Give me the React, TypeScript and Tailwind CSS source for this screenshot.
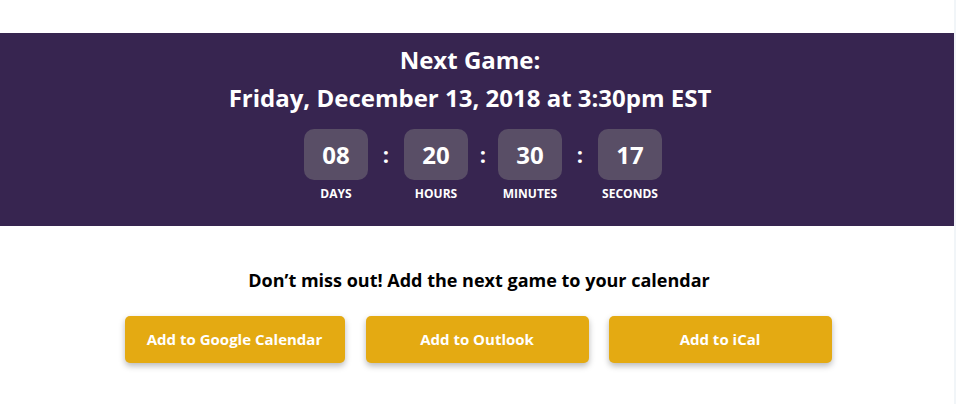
import React from "react";

const units = [
  { v: "08", l: "DAYS" },
  { v: "20", l: "HOURS" },
  { v: "30", l: "MINUTES" },
  { v: "17", l: "SECONDS" },
];

function Unit({ v, l }: { v: string; l: string }) {
  return (
    <div className="flex flex-col items-center w-[64px]">
      <div className="w-[64px] h-[51px] rounded-[10px] bg-[#594e66] flex items-center justify-center text-white text-[24px] font-bold leading-none">
        {v}
      </div>
      <div className="mt-[8px] text-white text-[12px] font-bold leading-none whitespace-nowrap">
        {l}
      </div>
    </div>
  );
}

function Colon({ w }: { w: string }) {
  return (
    <div className={`${w} h-[51px] flex items-center justify-center text-white text-[22px] font-bold leading-none pb-[2px]`}>
      :
    </div>
  );
}

export default function App() {
  return (
    <div
      className="w-[956px] h-[404px] bg-white flex"
      style={{ fontFamily: '"Open Sans", "Liberation Sans", sans-serif' }}
    >
      <div className="flex-1 flex flex-col">
        <div className="h-[33px]" />
        <div className="h-[193px] bg-[#372550] flex flex-col items-center">
          <div className="mt-[11px] pr-[14px] text-white text-[24px] font-bold leading-[32px]">Next Game:</div>
          <div className="mt-[6px] pr-[14px] text-white text-[24px] font-bold leading-[32px]">
            Friday, December 13, 2018 at 3:30pm EST
          </div>
          <div className="mt-[15px] pl-[12px] flex items-start">
            <Unit {...units[0]} />
            <Colon w="w-[36px]" />
            <Unit {...units[1]} />
            <Colon w="w-[30px]" />
            <Unit {...units[2]} />
            <Colon w="w-[36px]" />
            <Unit {...units[3]} />
          </div>
        </div>
        <div className="flex flex-col items-center">
          <div className="mt-[42px] pl-[4px] text-black text-[18px] font-bold leading-[24px]">
            Don’t miss out! Add the next game to your calendar
          </div>
          <div className="mt-[24px] flex pl-[2px]">
            {["Add to Google Calendar", "Add to Outlook", "Add to iCal"].map((t, i) => (
              <button
                key={t}
                className={`${i === 0 ? "w-[220px]" : i === 1 ? "w-[223px] ml-[21px]" : "w-[223px] ml-[20px]"} h-[47px] rounded-[5px] bg-[#e4aa12] text-white text-[15px] font-bold shadow-[0_3px_6px_rgba(0,0,0,0.28)]`}
              >
                {t}
              </button>
            ))}
          </div>
        </div>
      </div>
      <div className="w-[2px] bg-[#f1f5f8]" />
    </div>
  );
}
